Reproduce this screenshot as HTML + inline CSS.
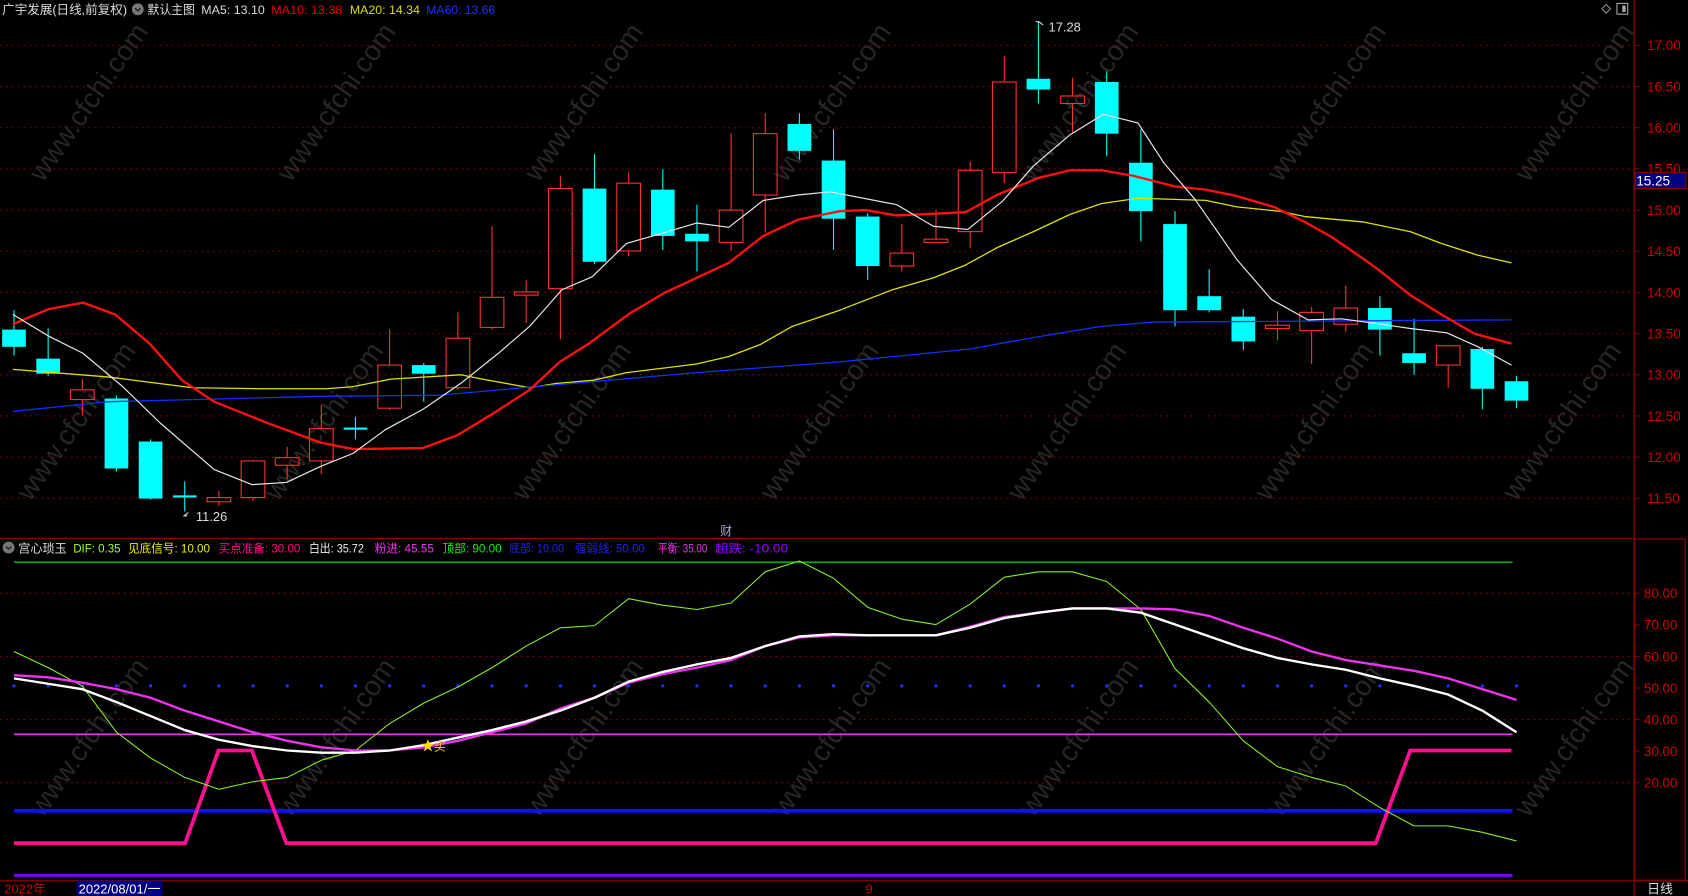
<!DOCTYPE html>
<html><head><meta charset="utf-8">
<style>
html,body{margin:0;padding:0;background:#000;width:1688px;height:896px;overflow:hidden}
svg{display:block}
text{font-family:"Liberation Sans","Noto Sans CJK SC",sans-serif}
</style></head>
<body>
<svg id="s" width="1688" height="896" viewBox="0 0 1568 832" xmlns="http://www.w3.org/2000/svg">
<rect width="1568" height="832" fill="#000"/>
<g id="wm" fill="#262626" font-size="26"></g>
<g id="grid"></g>
<g id="cs"></g>
<g id="lines" fill="none"></g>
<line x1="1518" y1="0" x2="1518" y2="832" stroke="#8b0000" stroke-width="1.2"/>
<line x1="0" y1="500" x2="1518" y2="500" stroke="#8b0000" stroke-width="1.2"/>
<line x1="0" y1="818" x2="1568" y2="818" stroke="#8b0000" stroke-width="1.2"/>
<rect x="1518.5" y="500.5" width="47" height="317" fill="none" stroke="#8b0000" stroke-width="1.2"/>
<g font-size="11.5" lengthAdjust="spacingAndGlyphs">
<text x="2" y="13" fill="#ddd" textLength="116" lengthAdjust="spacingAndGlyphs">广宇发展(日线,前复权)</text>
<text x="137" y="13" fill="#ddd" textLength="44" lengthAdjust="spacingAndGlyphs">默认主图</text>
<text x="187" y="13" fill="#ddd" textLength="59" lengthAdjust="spacingAndGlyphs">MA5: 13.10</text>
<text x="252" y="13" fill="#e00" textLength="66" lengthAdjust="spacingAndGlyphs">MA10: 13.38</text>
<text x="325" y="13" fill="#dd0" textLength="65" lengthAdjust="spacingAndGlyphs">MA20: 14.34</text>
<text x="396" y="13" fill="#2030ff" textLength="64" lengthAdjust="spacingAndGlyphs">MA60: 13.66</text>
</g>
<circle cx="128" cy="8.5" r="5.5" fill="#777"/><path d="M125.5 7.5l2.5 2.5 2.5-2.5" stroke="#222" stroke-width="1.3" fill="none"/>
<path d="M1492 4l4 4-4 4-4-4z" fill="none" stroke="#aaa" stroke-width="0.8"/>
<rect x="1502" y="3" width="10" height="10" fill="none" stroke="#aaa" stroke-width="1"/><rect x="1507" y="5" width="3" height="6" fill="#aaa"/>
<g font-size="12.5" fill="#c00" id="pax"></g>
<rect x="1519" y="160" width="47" height="15" fill="#000080" stroke="#8b0000"/>
<text x="1520" y="172" font-size="12.5" fill="#fff">15.25</text>
<path d="M962 20h3l4 3" stroke="#ddd" fill="none" stroke-width="1"/>
<text x="974" y="29" font-size="12" fill="#ddd">17.28</text>
<path d="M174 479h-3l4-3" stroke="#ddd" fill="none"/>
<text x="182" y="484" font-size="12" fill="#ddd">11.26</text>
<text x="669" y="497" font-size="11" fill="#aac">财</text>
<circle cx="8" cy="508.5" r="5.5" fill="#777"/><path d="M5.5 507.5l2.5 2.5 2.5-2.5" stroke="#222" stroke-width="1.3" fill="none"/>
<g font-size="11">
<text x="17" y="513" fill="#ddd" textLength="45" lengthAdjust="spacingAndGlyphs">宫心琐玉</text>
<text x="68" y="513" fill="#9f3" textLength="44" lengthAdjust="spacingAndGlyphs">DIF: 0.35</text>
<text x="119" y="513" fill="#ee0" textLength="76" lengthAdjust="spacingAndGlyphs">见底信号: 10.00</text>
<text x="203" y="513" fill="#f08" textLength="76" lengthAdjust="spacingAndGlyphs">买点准备: 30.00</text>
<text x="287" y="513" fill="#eee" textLength="51" lengthAdjust="spacingAndGlyphs">白出: 35.72</text>
<text x="348" y="513" fill="#e3e" textLength="55" lengthAdjust="spacingAndGlyphs">粉进: 45.55</text>
<text x="411" y="513" fill="#1e1" textLength="55" lengthAdjust="spacingAndGlyphs">顶部: 90.00</text>
<text x="473" y="513" fill="#22e" textLength="51" lengthAdjust="spacingAndGlyphs">底部: 10.00</text>
<text x="534" y="513" fill="#22e" textLength="65" lengthAdjust="spacingAndGlyphs">强弱线: 50.00</text>
<text x="611" y="513" fill="#e3e" textLength="46" lengthAdjust="spacingAndGlyphs">平衡: 35.00</text>
<text x="664" y="513" fill="#90f" textLength="68" lengthAdjust="spacingAndGlyphs">超跌: -10.00</text>
</g>
<g font-size="12.5" fill="#c00" id="lax"></g>
<text x="4" y="830" font-size="12" fill="#c00">2022年</text>
<rect x="71" y="818" width="80" height="14" fill="#000080"/>
<text x="73" y="830" font-size="12" fill="#fff" textLength="76" lengthAdjust="spacingAndGlyphs">2022/08/01/一</text>
<text x="804" y="830" font-size="12" fill="#c00">9</text>
<text x="1530" y="830" font-size="12" fill="#ddd">日线</text>
<text x="391" y="697" font-size="13" fill="#fd0">★</text>
<text x="403" y="697" font-size="11" fill="#fd0">买</text>
</svg>
<script>
var NS="http://www.w3.org/2000/svg";
function el(p,t,a){var e=document.createElementNS(NS,t);for(var k in a)e.setAttribute(k,a[k]);p.appendChild(e);return e;}
var g=document.getElementById('grid');
function py(p){return 42+(17-p)*76.5;}
var pax=document.getElementById('pax');
for(var p=17;p>=11.49;p-=0.5){var y=py(p);
 el(g,'line',{x1:0,x2:1518,y1:y,y2:y,stroke:'#8b0000','stroke-dasharray':'1.5 4','stroke-width':1});
 el(g,'line',{x1:1518,x2:1523,y1:y,y2:y,stroke:'#8b0000'});
 var t=el(pax,'text',{x:1530,y:y+4.5});t.textContent=p.toFixed(2);}
var lax=document.getElementById('lax');
function ly(v){return 551+(80-v)*2.93;}
for(var v=80;v>=20;v-=10){var y=ly(v);
 if(v%20==0)el(g,'line',{x1:0,x2:1518,y1:y,y2:y,stroke:'#8b0000','stroke-dasharray':'1.5 4'});
 el(g,'line',{x1:1518,x2:1523,y1:y,y2:y,stroke:'#8b0000'});
 var t=el(lax,'text',{x:1527,y:y+4.5});t.textContent=v.toFixed(2);}
var wm=document.getElementById('wm');
var wx=[40,270,500,730,960,1190,1420];var wy=[170,450,760];
wy.forEach(function(yy,ri){wx.forEach(function(xx){var t=el(wm,'text',{x:xx+(ri==1?-20:0),y:yy,transform:'rotate(-55 '+(xx)+' '+yy+')'});t.textContent='www.cfchi.com';});});
var C=[[306,322,288,330,0],[333,347,305,349,0],[362,371,352,386,1],[370,435,367,438,0],[410,463,408,464,0],[460,462,447,475,0],[462,466,456,470,1],[428,462,427,465,1],[425,432,415,445,1],[398,428,376,440,1],[397,399,387,408,0],[339,379,306,381,1],[339,347,337,373,0],[314,360,290,362,1],[276,304,210,306,1],[271,274,260,300,1],[175,268,163,315,1],[175,243,143,245,0],[170,233,160,238,1],[176,219,157,232,0],[217,224,190,252,0],[195,225,124,233,1],[124,181,105,216,1],[115,140,105,148,0],[149,203,120,232,0],[201,247,198,260,0],[235,247,208,252,1],[222,225,195,225,1],[158,215,150,230,1],[76,160,52,170,1],[73,83,20,96,0],[89,96,72,124,1],[76,124,66,145,0],[151,196,120,224,0],[208,288,196,303,0],[275,288,250,290,0],[294,317,287,325,0],[302,305,289,316,1],[290,307,285,338,1],[286,301,265,308,1],[286,306,275,330,0],[328,337,296,348,0],[321,339,321,360,1],[324,361,322,380,0],[354,372,349,379,0]];
var cs=document.getElementById('cs');
var X=[];for(var i=0;i<45;i++)X.push(13+i*31.72);
C.forEach(function(c,i){var x=X[i];var col=c[4]?'#ff3232':'#00ffff';
 if(c[4]){el(cs,'line',{x1:x,x2:x,y1:c[2],y2:c[0],stroke:col});el(cs,'line',{x1:x,x2:x,y1:c[1],y2:c[3],stroke:col});
  el(cs,'rect',{x:x-11,y:c[0],width:22,height:Math.max(c[1]-c[0],1),fill:'none',stroke:col});}
 else{el(cs,'line',{x1:x,x2:x,y1:c[2],y2:c[3],stroke:col});el(cs,'rect',{x:x-11,y:c[0],width:22,height:Math.max(c[1]-c[0],2),fill:col});}
});
var L=document.getElementById('lines');
function pl(ys,col,w){var pts=ys.map(function(y,i){return X[i].toFixed(1)+','+y;}).join(' ');el(L,'polyline',{points:pts,stroke:col,'stroke-width':w,'stroke-linejoin':'round'});}
function pp(pts,col,w){el(L,'polyline',{points:pts,stroke:col,'stroke-width':w,'stroke-linejoin':'round'});}
pp('12,343 100,350 179,360 249,361 303,361 328,359 363,352 428,348 448,352 492,360 517,356 552,353 582,346 647,338 677,331 706,320 736,303 780,288 829,269 867,258 897,246 926,230 960,215 994,199 1023,189 1057,184 1120,186 1149,192 1188,196 1212,201 1266,206 1310,215 1339,226 1373,237 1404,244','#e0e000',1.2);
pp('12,382 100,373 298,368 408,367 497,359 647,346 780,336 901,324 974,311 1023,303 1072,299 1404,297','#1030ff',1.2);
pp('12,301 45,287 77,281 107,292 139,319 169,353 199,373 249,393 298,411 328,417 393,416 425,404 458,384 492,362 520,336 547,319 585,291 617,272 647,258 677,244 709,219 741,204 780,196 804,195 833,200 897,197 926,181 965,165 994,158 1023,158 1052,163 1091,173 1120,176 1149,182 1183,192 1212,206 1237,220 1266,240 1280,250 1310,274 1339,292 1370,310 1404,319','#ff1010',2.2);
pp('12,292 45,312 77,328 114,359 149,393 199,436 234,450 266,448 298,433 328,421 358,399 393,380 428,356 463,328 492,303 522,269 550,257 582,226 617,216 647,207 677,211 709,186 741,181 771,178 833,190 867,210 899,213 931,187 960,154 994,125 1025,106 1057,114 1081,151 1110,185 1149,241 1181,278 1215,297 1246,296 1276,300 1310,305 1344,309 1373,322 1404,339','#e8e8e8',1.1);
el(L,'line',{x1:13,x2:1405,y1:522,y2:522,stroke:'#00dd00','stroke-width':1.2});
el(L,'line',{x1:13,x2:1405,y1:682,y2:682,stroke:'#ee33ee','stroke-width':1.5});
el(L,'line',{x1:13,x2:1405,y1:753,y2:753,stroke:'#1010ff','stroke-width':3.5});
el(L,'line',{x1:13,x2:1405,y1:813,y2:813,stroke:'#8000ff','stroke-width':2.5});
for(var i=0;i<45;i++)el(L,'circle',{cx:X[i],cy:637,r:1.5,fill:'#2030ff'});
el(L,'polyline',{points:'13,783 172,783 203,697 234,697 266,783 1278,783 1310,697 1404,697',stroke:'#ff1090','stroke-width':3.5});
pl([605,620,637,680,704,722,733,726,722,706,697,672,653,638,620,600,583,581,556,562,566,560,531,521,537,564,575,580,561,536,531,531,540,566,621,652,688,712,722,730,750,767,767,773,781],'#88ee22',1);
pl([627,629,634,640,648,660,670,680,688,694,697,697,694,688,680,672,658,648,634,626,620,613,600,592,590,590,590,590,582,573,569,565,565,565,566,572,583,593,605,613,618,623,630,640,650],'#ee33ee',2.2);
pl([630,635,640,652,665,678,687,693,697,699,699,697,692,685,678,670,660,648,633,624,617,611,600,591,589,590,590,590,583,574,569,565,565,569,580,591,602,611,617,622,630,637,645,660,680],'#ffffff',2.2);
</script>
</body></html>
